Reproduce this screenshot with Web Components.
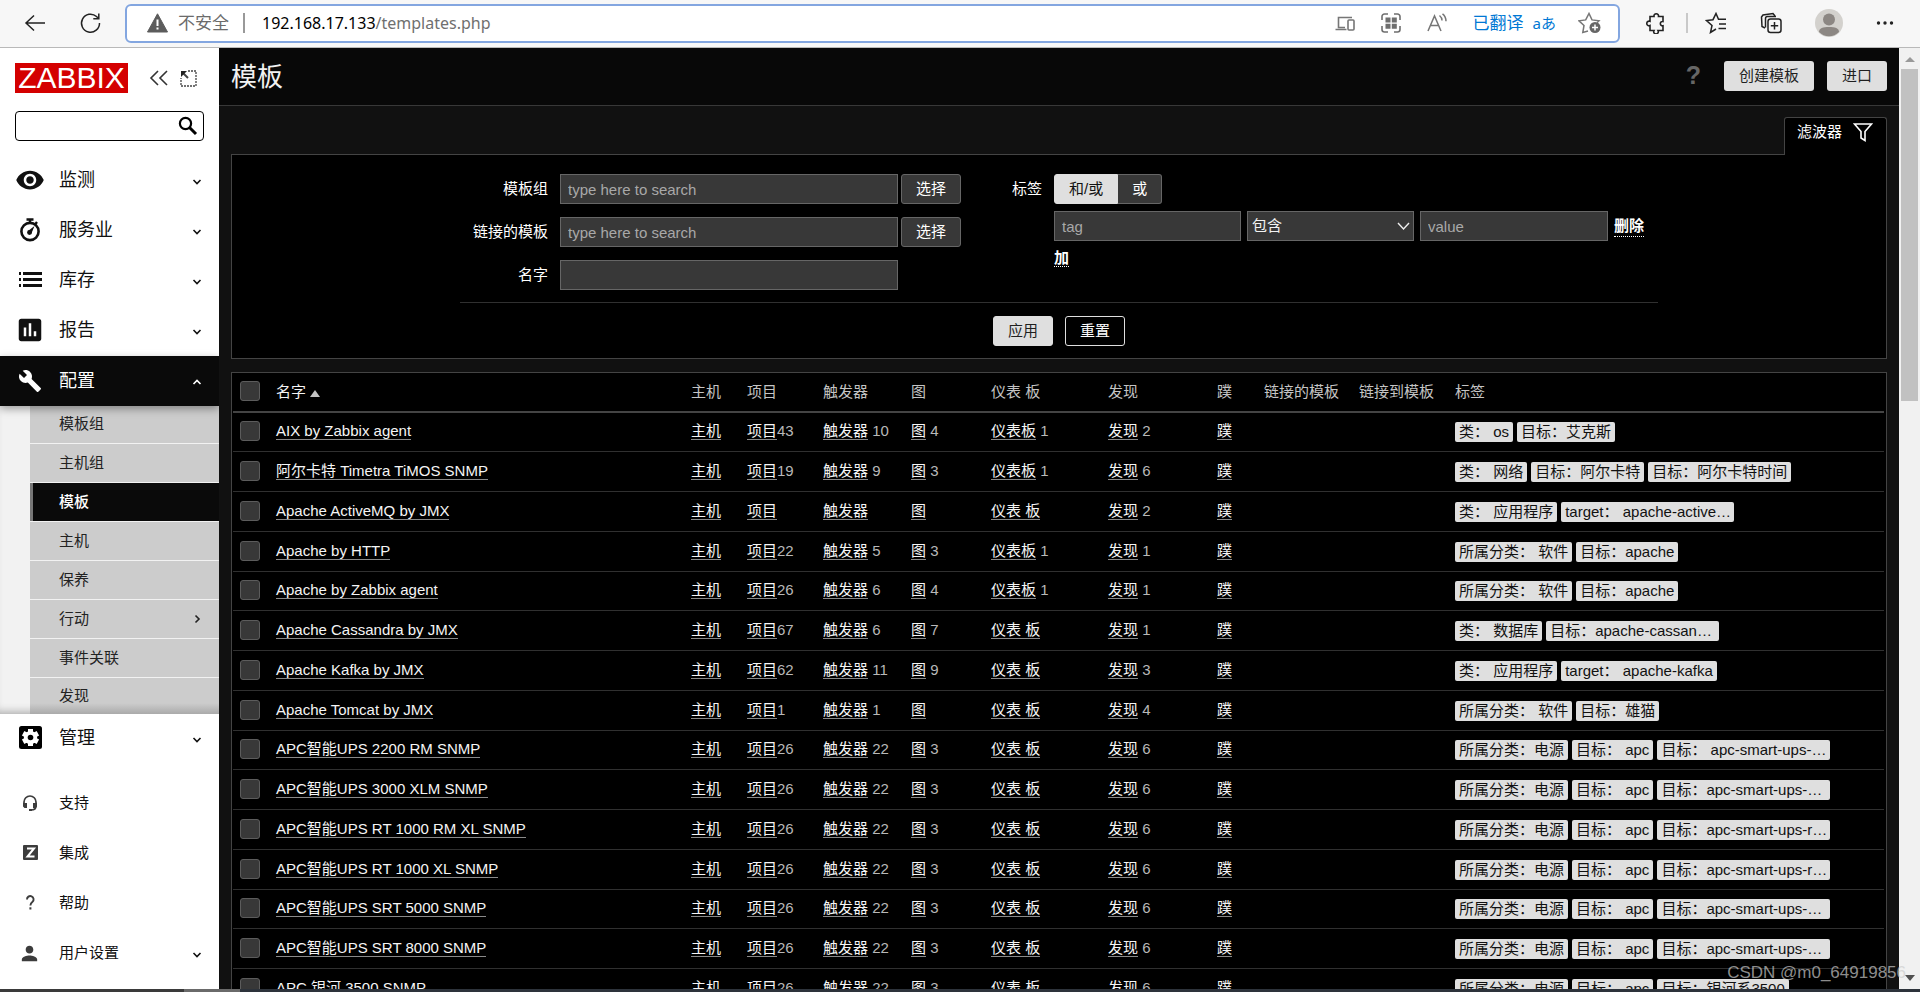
<!DOCTYPE html>
<html lang="zh-CN">
<head>
<meta charset="utf-8">
<title>模板</title>
<style>
html,body{margin:0;height:100%}
body{font:15px/20px "Liberation Sans","Noto Sans CJK SC",sans-serif;color:#f2f2f2;background:#111;overflow:hidden}
</style>
</head>
<body>
<app-window></app-window>
<script>
const base = `*{box-sizing:border-box}a{color:inherit;text-decoration:none}button,input,select{font:inherit;margin:0}svg{display:block;flex:none}`;
function define(name, css, html, setup) {
  const t = document.createElement('template');
  t.innerHTML = `<style>${base}${css}</style>${html}`;
  customElements.define(name, class extends HTMLElement {
    constructor() {
      super();
      this.attachShadow({mode: 'open'}).appendChild(t.content.cloneNode(true));
    }
    connectedCallback() { if (setup) setup(this.shadowRoot, this); }
  });
}

const icons = {
  eye: [30, 24, '<path fill="currentColor" d="M12 4.5C7 4.5 2.73 7.61 1 12c1.73 4.39 6 7.5 11 7.5s9.27-3.11 11-7.5c-1.73-4.39-6-7.5-11-7.5zM12 17c-2.76 0-5-2.24-5-5s2.24-5 5-5 5 2.24 5 5-2.24 5-5 5zm0-8c-1.66 0-3 1.34-3 3s1.34 3 3 3 3-1.34 3-3-1.34-3-3-3z"/>'],
  watch: [30, 30, '<g fill="none" stroke="currentColor" stroke-width="2.6"><circle cx="15" cy="16.500" r="8.6"/><path d="M11.5 4.500h7M15 4.500v4M22 7l-2 2.5" stroke-width="2.4"/></g><circle cx="14.5" cy="17.500" r="2.4" fill="currentColor"/><path d="M19.5 11l-3.2 7.8-3.6-2.6z" fill="currentColor"/>'],
  list: [30, 30, '<path fill="currentColor" d="M4 7h2v3H4zM4 13h2v3H4zM4 19h2v3H4zM8 7h19v3H8zM8 13h19v3H8zM8 19h19v3H8z"/>'],
  chart: [30, 24, '<path fill="currentColor" d="M19 3H5c-1.1 0-2 .9-2 2v14c0 1.1.9 2 2 2h14c1.1 0 2-.9 2-2V5c0-1.1-.9-2-2-2zM9 17H7v-7h2v7zm4 0h-2V6.500h2V17zm4 0h-2v-4h2v4z"/>'],
  wrench: [24, 24, '<path fill="currentColor" d="M22.700 19l-9.100-9.100c.9-2.300.4-5-1.500-6.900-2-2-5-2.400-7.400-1.300L9 6 6 9 1.600 4.700C.4 7.100.9 10.100 2.900 12.100c1.900 1.900 4.600 2.400 6.900 1.500l9.100 9.100c.4.4 1 .4 1.400 0l2.300-2.300c.5-.4.5-1.100.1-1.400z"/>'],
  gear: [30, 30, '<rect x="4" y="3" width="23" height="23" rx="2.500" fill="#000"/><g fill="#fff"><circle cx="15.500" cy="14.500" r="6.600"/><rect x="13" y="6" width="5" height="17"/><rect x="13" y="6" width="5" height="17" transform="rotate(60 15.500 14.500)"/><rect x="13" y="6" width="5" height="17" transform="rotate(120 15.500 14.500)"/></g><circle cx="15.500" cy="14.500" r="2.800" fill="#000"/>'],
  headset: [18, 18, '<path d="M3 12V8a6 6 0 0 1 12 0v4c0 3-2 4-5 4" fill="none" stroke="currentColor" stroke-width="1.700"/><path fill="currentColor" d="M2 9h4v5H3.500L2 12.500zM16 9h-4v5h2.500l1.500-1.500zM8 15h3v2H8z"/>'],
  zed: [18, 18, '<rect x="2" y="1" width="15" height="15" rx="1" fill="currentColor"/><path d="M6 4.500h7L6.500 12.500h7" fill="none" stroke="#fff" stroke-width="2"/>'],
  help: [18, 18, '<path d="M6 5.500a3.300 3.300 0 1 1 5.500 2.300C10 9 9.400 9.500 9.400 11.600" fill="none" stroke="currentColor" stroke-width="1.900"/><rect x="8.400" y="13.300" width="2" height="2.200" fill="currentColor"/>'],
  person: [23, 24, '<path fill="currentColor" d="M12 12c2.210 0 4-1.790 4-4s-1.790-4-4-4-4 1.790-4 4 1.790 4 4 4zm0 2c-2.670 0-8 1.340-8 4v2h16v-2c0-2.660-5.330-4-8-4z"/>'],
  down: [10, 10, '<path d="M1.500 3L5 6.500 8.500 3" fill="none" stroke="currentColor" stroke-width="1.600"/>'],
  up: [10, 10, '<path d="M1.500 7L5 3.500 8.500 7" fill="none" stroke="currentColor" stroke-width="1.600"/>'],
  right: [10, 10, '<path d="M3.500 1.500L7 5 3.500 8.500" fill="none" stroke="currentColor" stroke-width="1.600"/>']
};
const icon = n => `<svg width="${icons[n][0]}" height="${icons[n][0]}" viewBox="0 0 ${icons[n][1]} ${icons[n][1]}" aria-hidden="true">${icons[n][2]}</svg>`;

/* Browser toolbar */
define('browser-bar', `
:host{display:flex;align-items:center;height:48px;background:#f7f7f7;border-bottom:1px solid #b9b9b9;color:#222;padding:0 26px 0 24px;font:16px/22px "Noto Sans","Noto Sans CJK SC",sans-serif}
button{border:0;background:none;padding:0;color:inherit;display:block}
.nav{display:flex;gap:33px;width:101px;padding-bottom:2px}
.addr{flex:1;display:flex;align-items:center;height:39px;margin-bottom:1px;border:2px solid #83a6e0;border-radius:6px;background:#fff;padding:0 16px 0 20px;color:#6b6b6b}
.unsafe{font-size:17px;margin-left:10px}
.sep{width:2px;height:20px;background:#999;margin:0 17px 0 14px}
.url{flex:1;color:#6f6f6f;min-width:0;white-space:nowrap}
.url b{font-weight:400;color:#000}
.tools{display:flex;align-items:center;gap:26px}
.tools button:last-child{margin-left:-4px}
.tr{color:#0078d4;font-size:17px;display:flex;gap:9px;white-space:nowrap}
.tr span{font-size:15px}
.right{display:flex;align-items:center;gap:33px;margin-left:25px;padding-bottom:1px}
.right i{width:2px;height:20px;background:#c9c9c9;margin:0 -16px 0 -14px}
`, `
<div class="nav">
 <button aria-label="后退"><svg width="22" height="22" fill="none" stroke="#222" stroke-width="1.500"><path d="M21 11H2M10 3.500L2 11l8 7.500"/></svg></button>
 <button aria-label="刷新"><svg width="22" height="22" fill="none" stroke="#222" stroke-width="1.500"><path d="M20.500 11A9 9 0 1 1 17.500 4.500L19.500 6.500M19.800 1.500v5.300h-5.500"/></svg></button>
</div>
<div class="addr">
 <svg width="21" height="20"><path d="M10.500.8L20.500 19H.5z" fill="#5c5c5c" stroke="#5c5c5c" stroke-linejoin="round"/><path d="M9.500 6.500h2v6.500h-2zM9.500 14.500h2v2h-2z" fill="#fff"/></svg>
 <span class="unsafe">不安全</span><span class="sep"></span>
 <span class="url"><b>192.168.17.133</b>/templates.php</span>
 <div class="tools">
  <button aria-label="发送到设备"><svg width="20" height="20" fill="none" stroke="#767676" stroke-width="1.600"><path d="M10 14.500H3.500V4.500H17M.5 16.500h11"/><rect x="13" y="7" width="6" height="10" rx="1"/></svg></button>
  <button aria-label="二维码"><svg width="20" height="20" fill="none" stroke="#6f6f6f" stroke-width="1.600"><path d="M1 7V3.500A2.500 2.500 0 0 1 3.500 1H7M13 1h3.500A2.500 2.500 0 0 1 19 3.500V7M19 13v3.500a2.500 2.500 0 0 1-2.500 2.500H13M7 19H3.500A2.500 2.500 0 0 1 1 16.500V13"/><path fill="#6f6f6f" stroke="none" d="M4.500 4.500h5v5h-5zM10.800 4.500h5v5h-5zM4.500 10.800h5v5h-5zM10.800 10.800h5v5h-5z"/></svg></button>
  <button aria-label="大声朗读"><svg width="20" height="20" fill="none" stroke="#767676" stroke-width="1.500"><path d="M1 18L7.500 3 14 18M3.500 12.500h8M12.500 2.500q2.500 2 2.500 5M15.500.8q3.500 2.700 3.500 7.500"/></svg></button>
  <div class="tr">已翻译 <span>aあ</span></div>
  <button aria-label="收藏"><svg width="24" height="22" fill="none" stroke="#767676" stroke-width="1.500"><path d="M10 19L4.800 20.500 6 13.500 1 8.800l6.700-.9L11 1.500l3 6.400 7 .9-2 2"/><circle cx="17" cy="15.500" r="5.500" fill="#666" stroke="none"/><path d="M17 12.500v6M14 15.500h6" stroke="#fff"/></svg></button>
 </div>
</div>
<div class="right">
 <button aria-label="扩展"><svg width="22" height="22" fill="none" stroke="#222" stroke-width="1.600"><path d="M5 4.500h4a2.300 2.300 0 1 1 4.500 0H18v5a2.200 2.200 0 1 0 0 4.300v4.700h-5a2.300 2.300 0 1 1-4 0H5v-5a2.300 2.300 0 1 1 0-4.200z"/></svg></button>
 <i></i>
 <button aria-label="收藏夹"><svg width="22" height="22" fill="none" stroke="#222" stroke-width="1.500"><path d="M11 17l-5.500 3.500L7 13.500 1.500 8.500l6.500-.8L11 1.500l2.500 5.700H21M14 12h7M13.500 16.500H21"/></svg></button>
 <button aria-label="集锦"><svg width="22" height="22" fill="none" stroke="#222" stroke-width="1.500"><path d="M5 16L2 14.500 1.500 5 3 3l10-1.500 2 2.500"/><path d="M5.500 15.500V6.500a2 2 0 0 1 2-2H16"/><rect x="8" y="7" width="13" height="13.500" rx="2.500"/><path d="M14.500 10v7.500M10.800 13.700h7.400"/></svg></button>
 <button aria-label="个人资料"><svg width="28" height="28"><circle cx="14" cy="14" r="14" fill="#d3d1cd"/><circle cx="14" cy="10.500" r="6" fill="#8c8783"/><path d="M4 23c0-4 4-5 10-5s10 1 10 5a14 14 0 0 1-20 0z" fill="#8c8783"/></svg></button>
 <button aria-label="更多"><svg width="18" height="6" fill="#222"><circle cx="2.500" cy="3" r="1.700"/><circle cx="9" cy="3" r="1.700"/><circle cx="15.500" cy="3" r="1.700"/></svg></button>
</div>`);

/* One entry of the side menu */
define('menu-item', `
:host{display:block;font-size:18px;color:#111}
a{display:flex;align-items:center;height:50px;padding:0 17px 2px 0}
.ic{width:59px;display:flex;justify-content:center;flex:none}
.t{flex:1}
.ar{padding-top:4px;width:10px}
:host([active]){background:#0a0a0a;color:#fff;box-shadow:0 3px 8px rgba(0,0,0,.35);position:relative}
:host([active]) a{padding-bottom:0}
:host([active]) .ar{padding-top:2px}
:host([small]){font-size:15px}
:host([small]) .ic{color:#3c3c3c}
`, `<a href="#"><span class="ic"></span><span class="t"><slot></slot></span><span class="ar"></span></a>`,
(r, h) => {
  r.querySelector('.ic').innerHTML = icon(h.getAttribute('icon'));
  const a = h.getAttribute('arrow');
  if (a) r.querySelector('.ar').innerHTML = icon(a);
});

define('sub-menu', `
:host{display:block;background:#f2f2f2;padding-left:30px;margin-top:-1px;box-shadow:inset 0 -8px 8px -6px rgba(0,0,0,.3)}
nav{display:grid;gap:1px}
a{display:flex;align-items:center;justify-content:space-between;height:38px;padding:0 17px 0 29px;background:#ccc;color:#222}
a.on{background:#0a0a0a;color:#fff;font-weight:500;border-left:3px solid #777;padding-left:26px}
a:last-child{height:36px;background:linear-gradient(#ccc 70%,#aaa)}
`, `<nav>${['模板组','主机组','模板','主机','保养','行动','事件关联','发现'].map(t =>
  `<a href="#"${t === '模板' ? ' class="on" aria-current="page"' : ''}>${t}${t === '行动' ? icon('right') : ''}</a>`).join('')}</nav>`);

define('side-bar', `
:host{display:block;background:#fff;width:219px;color:#000}
.top{display:flex;align-items:center;padding:15px 22px 18px 15px}
.logo{background:#d40000;color:#fff;width:114px;height:30px;font-size:30px;line-height:30px;text-align:center;margin-right:21px}
button{border:0;background:none;padding:0;display:block}
.c{margin-left:11px}
form{display:flex;align-items:center;margin:0 15px;height:30px;border:1px solid #000;border-radius:4px;padding-right:5px}
input{border:0;background:none;outline:0;flex:1;min-width:0;padding:0 6px}
.main{margin-top:15px}
.low{margin-top:15px}
`, `
<div class="top"><a class="logo" href="#">ZABBIX</a>
<button aria-label="折叠"><svg width="20" height="16" fill="none" stroke="#333" stroke-width="1.600"><path d="M9 1L2 8l7 7M18 1l-7 7 7 7"/></svg></button>
<button class="c" aria-label="紧凑"><svg width="17" height="17" fill="none" stroke="#444" stroke-width="1.300"><path d="M8 1h8v15H1V8" stroke-dasharray="2 1"/><path d="M3 3l5 5" stroke-width="2"/><path d="M1 1h6L1 7z" fill="#222" stroke="none"/></svg></button></div>
<form><input type="text" aria-label="搜索"><button type="button" aria-label="搜索"><svg width="20" height="20" fill="none" stroke="#000"><circle cx="7.500" cy="7.500" r="5.600" stroke-width="2.200"/><path d="M11.500 11.500l6.500 6.500" stroke-width="3"/></svg></button></form>
<div class="main">
<menu-item icon="eye" arrow="down">监测</menu-item>
<menu-item icon="watch" arrow="down">服务业</menu-item>
<menu-item icon="list" arrow="down">库存</menu-item>
<menu-item icon="chart" arrow="down">报告</menu-item>
<menu-item icon="wrench" arrow="up" active>配置</menu-item>
<sub-menu></sub-menu>
<menu-item icon="gear" arrow="down">管理</menu-item>
</div>
<div class="low">
<menu-item small icon="headset">支持</menu-item>
<menu-item small icon="zed">集成</menu-item>
<menu-item small icon="help">帮助</menu-item>
<menu-item small icon="person" arrow="down">用户设置</menu-item>
</div>`);

define('page-header', `
:host{display:flex;align-items:center;gap:13px;height:58px;padding:0 12px;background:#080808;border-bottom:1px solid #383838}
h1{font-size:26px;line-height:36px;font-weight:400;margin:0;flex:1}
a{color:#666;font-size:25px;font-weight:700;padding:0 10px 4px 0}
button{height:30px;border:0;border-radius:3px;background:#dfdfdf;color:#1f1f1f;padding:0 15px;margin:0 0 1px}
`, `<h1>模板</h1><a href="#" aria-label="帮助">?</a><button>创建模板</button><button>进口</button>`);

define('filter-panel', `
:host{display:block}
.tab{display:flex;justify-content:space-between;width:103px;height:38px;margin:11px 0 -1px auto;padding:4px 13px 0 12px;border:1px solid #444;border-bottom:0;border-radius:3px 3px 0 0;background:#000;position:relative;color:#fff}
.panel{background:#000;border:1px solid #444;padding:19px 0 12px}
.cols{display:flex;width:1198px;margin:0 auto;padding-bottom:12px;border-bottom:1px solid #303030}
.l{display:grid;grid-template-columns:88px 338px 60px;column-gap:12px;row-gap:13px;width:501px;align-items:center}
.l button{margin-left:-9px;width:60px}
label,.lab{text-align:right;color:#fff}
.r{display:grid;grid-template-columns:81px 604px;column-gap:12px}
.lab{line-height:30px}
input[type=text],select{height:30px;background:#383838;border:1px solid #666;color:#f2f2f2;padding:0 7px;border-radius:0;width:100%;outline:0}
input::placeholder{color:#a8a8a8;opacity:1}
button{height:30px;border:1px solid #666;border-radius:3px;background:#383838;color:#fff;padding:0}
.seg{display:flex}
.seg label{height:30px;line-height:28px;padding:0 14px;border:1px solid #666;background:#383838;position:relative}
.seg input{position:absolute;opacity:0;margin:0}
.seg label.on{background:#dfdfdf;border-color:#dfdfdf;color:#111;border-radius:3px 0 0 3px}
.seg label:last-child{border-left:0;border-radius:0 3px 3px 0}
.row{display:grid;grid-template-columns:187px 167px 188px auto;column-gap:6px;margin:7px 0;align-items:center}
.sel{position:relative}
.sel select{appearance:none;padding:0 4px}
.sel svg{position:absolute;right:4px;top:9px;pointer-events:none}
.r a{font-weight:700;border-bottom:1px dotted #fff;color:#fff;justify-self:start;white-space:nowrap}
.btns{display:flex;justify-content:center;gap:12px;padding-top:13px}
.btns button{width:60px;background:#000;border-color:#dfdfdf}
.btns button:first-child{background:#dfdfdf;color:#1f1f1f}
`, `
<a class="tab" href="#">滤波器<svg width="20" height="20" fill="none" stroke="#fff" stroke-width="1.600"><path d="M1.500 2h17L12 9.500V18.500l-4-2.500V9.500z"/></svg></a>
<form class="panel" onsubmit="return false">
<div class="cols">
 <div class="l">
  <label for="g">模板组</label><input type="text" id="g" placeholder="type here to search"><button>选择</button>
  <label for="t">链接的模板</label><input type="text" id="t" placeholder="type here to search"><button>选择</button>
  <label for="n">名字</label><input type="text" id="n">
 </div>
 <div class="r"><span class="lab">标签</span>
  <div>
   <div class="seg"><label class="on"><input type="radio" name="m" checked>和/或</label><label><input type="radio" name="m">或</label></div>
   <div class="row"><input type="text" placeholder="tag" aria-label="标签"><span class="sel"><select aria-label="运算符"><option>包含</option></select><svg width="13" height="12" fill="none" stroke="#eee" stroke-width="1.400"><path d="M1 3l5.500 6L12 3"/></svg></span><input type="text" placeholder="value" aria-label="值"><a href="#">删除</a></div>
   <a href="#">加</a>
  </div>
 </div>
</div>
<div class="btns"><button>应用</button><button>重置</button></div>
</form>`);

define('tag-pill', `
:host{display:block;height:20px;line-height:20px;padding:0 4px;border-radius:2px;background:#dfdfdf;color:#111;white-space:nowrap}
:host([cut]){width:173px}
`, `<slot></slot>`);

const apc = (n, s) => [n, '26', '22', '3', '', '6', ['所属分类：电源', '目标： apc', '目标：' + s]];
const rows = [
  ['AIX by Zabbix agent', '43', '10', '4', '1', '2', ['类： os', '目标：艾克斯']],
  ['阿尔卡特 Timetra TiMOS SNMP', '19', '9', '3', '1', '6', ['类： 网络', '目标：阿尔卡特', '目标：阿尔卡特时间']],
  ['Apache ActiveMQ by JMX', '', '', '', '', '2', ['类： 应用程序', 'target： apache-active…']],
  ['Apache by HTTP', '22', '5', '3', '1', '1', ['所属分类： 软件', '目标：apache']],
  ['Apache by Zabbix agent', '26', '6', '4', '1', '1', ['所属分类： 软件', '目标：apache']],
  ['Apache Cassandra by JMX', '67', '6', '7', '', '1', ['类： 数据库', '目标：apache-cassan…']],
  ['Apache Kafka by JMX', '62', '11', '9', '', '3', ['类： 应用程序', 'target： apache-kafka']],
  ['Apache Tomcat by JMX', '1', '1', '', '', '4', ['所属分类： 软件', '目标：雄猫']],
  apc('APC智能UPS 2200 RM SNMP', ' apc-smart-ups-…'),
  apc('APC智能UPS 3000 XLM SNMP', 'apc-smart-ups-…'),
  apc('APC智能UPS RT 1000 RM XL SNMP', 'apc-smart-ups-r…'),
  apc('APC智能UPS RT 1000 XL SNMP', 'apc-smart-ups-r…'),
  apc('APC智能UPS SRT 5000 SNMP', 'apc-smart-ups-…'),
  apc('APC智能UPS SRT 8000 SNMP', 'apc-smart-ups-…'),
  apc('APC 银河 3500 SNMP', '银河系3500')
];
const cell = (t, n, sp = ' ') => `<td><a href="#">${t}</a>${n ? sp + n : ''}</td>`;
const rowHtml = ([name, items, trig, graph, dash, disc, tags]) => `<tr><td class="cb"><input type="checkbox" aria-label="${name}"></td>${cell(name)}${cell('主机')}${cell('项目', items, '')}${cell('触发器', trig)}${cell('图', graph)}${cell(dash ? '仪表板' : '仪表 板', dash)}${cell('发现', disc)}${cell('蹼')}<td></td><td></td><td><div class="tags">${tags.map(t => `<tag-pill${t.endsWith('…') ? ' cut' : ''}>${t}</tag-pill>`).join('')}</div></td></tr>`;

define('template-table', `
:host{display:block;margin-top:13px;background:#000;border:1px solid #444;padding:0 2px 0 1px}
table{width:100%;table-layout:fixed;border-collapse:separate;border-spacing:0;color:#b8b8b8}
td,th{padding:0 0 2px 8px;text-align:left;font-weight:400;white-space:nowrap;vertical-align:middle;height:40px;border-bottom:1px solid #303030}
th{border-bottom:2px solid #444;padding-bottom:0;color:#c4c4c4}
th.s{color:#f2f2f2}
.s i{display:inline-block;border:5px solid transparent;border-top:0;border-bottom:7px solid #c4c4c4;margin-left:4px}
tbody tr:nth-child(4n+1) td{height:39px}
td.cb,th.cb{padding:0 0 2px 7px}
input{appearance:none;display:block;width:20px;height:20px;border:1px solid #5c5c5c;border-radius:3px;background:#383838}
td a{color:#f5f5f5;border-bottom:1px solid #8a8a8a}
.tags{display:flex;gap:4px;padding-top:2px}
`, `<table><colgroup>${['35px','','56px','76px','88px','80px','117px','109px','47px','95px','96px','437px'].map(w => `<col${w ? ` style="width:${w}"` : ''}>`).join('')}</colgroup>
<thead><tr><th class="cb"><input type="checkbox" aria-label="全选"></th><th class="s">名字<i></i></th>${['主机','项目','触发器','图','仪表 板','发现','蹼','链接的模板','链接到模板','标签'].map(h => `<th>${h}</th>`).join('')}</tr></thead>
<tbody>${rows.map(rowHtml).join('')}</tbody></table>`);

define('scroll-bar', `
:host{display:flex;flex-direction:column;align-items:center;justify-content:space-between;width:21px;background:#f1f1f1;padding:9px 0 8px}
.thumb{width:17px;height:332px;background:#c1c1c1;margin:7px 0 auto}
`, `<svg width="10" height="5"><path d="M0 5L5 0l5 5z" fill="#999"/></svg><div class="thumb"></div><svg width="10" height="6"><path d="M0 0h10L5 6z" fill="#505050"/></svg>`);

define('app-window', `
:host{display:flex;flex-direction:column;height:100vh;overflow:hidden}
.app{flex:1;min-height:0;display:flex}
side-bar{flex:none;overflow:hidden}
main{flex:1;min-width:0;overflow:hidden;background:#111}
.body{padding:0 12px}
.task{height:3px;flex:none;background:linear-gradient(90deg,#3a3a3a 184px,#6a6a6a 184px 240px,#2d333b 240px)}
.mark{position:absolute;right:14px;bottom:8px;font-size:17px;line-height:22px;color:rgba(205,205,205,.7)}
`, `
<browser-bar></browser-bar>
<div class="app"><side-bar></side-bar>
<main><page-header></page-header><div class="body"><filter-panel></filter-panel><template-table></template-table></div></main>
<scroll-bar></scroll-bar></div>
<div class="task"></div><div class="mark">CSDN @m0_64919856</div>`);
</script>
</body>
</html>
